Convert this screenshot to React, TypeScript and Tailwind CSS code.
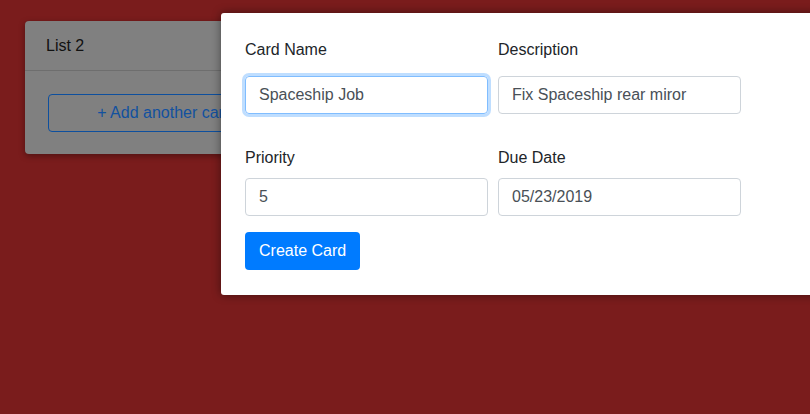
import React from "react";

export default function App() {
  return (
    <div
      className="relative h-[414px] w-[810px] overflow-hidden bg-[#7a1c1c]"
      style={{ fontFamily: '"Liberation Sans", Arial, sans-serif' }}
    >
      {/* List panel (dimmed) */}
      <div className="ml-[25px] mt-[21px] w-[280px] rounded-[4px] bg-[#808080] shadow-[0_2px_6px_rgba(0,0,0,0.35)]">
        <div className="flex h-[50px] items-center border-b border-[#6e6e6e] px-[21px] text-[16px] text-[#111]">
          List 2
        </div>
        <div className="px-[23px] pb-[22px] pt-[23px]">
          <button className="flex h-[38px] w-full items-center justify-center rounded-[4px] border border-[#0d4f9e] text-[16px] text-[#12519f]">
            + Add another card
          </button>
        </div>
      </div>

      {/* Modal overlay */}
      <div className="absolute left-[221px] top-[13px] w-[620px] rounded-l-[3px] bg-white px-[24px] pb-[25px] pt-[25px] shadow-[0_0_10px_rgba(0,0,0,0.45)]">
        <div className="flex gap-[10px]">
          <div className="w-[243px]">
            <div className="h-[24px] text-[16px] leading-[24px] text-[#212529]">Card Name</div>
            <input
              readOnly
              value="Spaceship Job"
              className="mt-[14px] h-[38px] w-full rounded-[4px] border border-[#80bdff] px-[13px] text-[16px] text-[#495057] shadow-[0_0_0_3px_rgba(0,123,255,0.25)] outline-none"
            />
          </div>
          <div className="w-[243px]">
            <div className="h-[24px] text-[16px] leading-[24px] text-[#212529]">Description</div>
            <input
              readOnly
              value="Fix Spaceship rear miror"
              className="mt-[14px] h-[38px] w-full rounded-[4px] border border-[#ced4da] px-[13px] text-[16px] text-[#495057] outline-none"
            />
          </div>
        </div>
        <div className="mt-[32px] flex gap-[10px]">
          <div className="w-[243px]">
            <div className="h-[24px] text-[16px] leading-[24px] text-[#212529]">Priority</div>
            <input
              readOnly
              value="5"
              className="mt-[8px] h-[38px] w-full rounded-[4px] border border-[#ced4da] px-[13px] text-[16px] text-[#495057] outline-none"
            />
          </div>
          <div className="w-[243px]">
            <div className="h-[24px] text-[16px] leading-[24px] text-[#212529]">Due Date</div>
            <input
              readOnly
              value="05/23/2019"
              className="mt-[8px] h-[38px] w-full rounded-[4px] border border-[#ced4da] px-[13px] text-[16px] text-[#495057] outline-none"
            />
          </div>
        </div>
        <button className="mt-[16px] flex h-[38px] items-center rounded-[4px] bg-[#007bff] px-[14px] text-[16px] text-white">
          Create Card
        </button>
      </div>
    </div>
  );
}
